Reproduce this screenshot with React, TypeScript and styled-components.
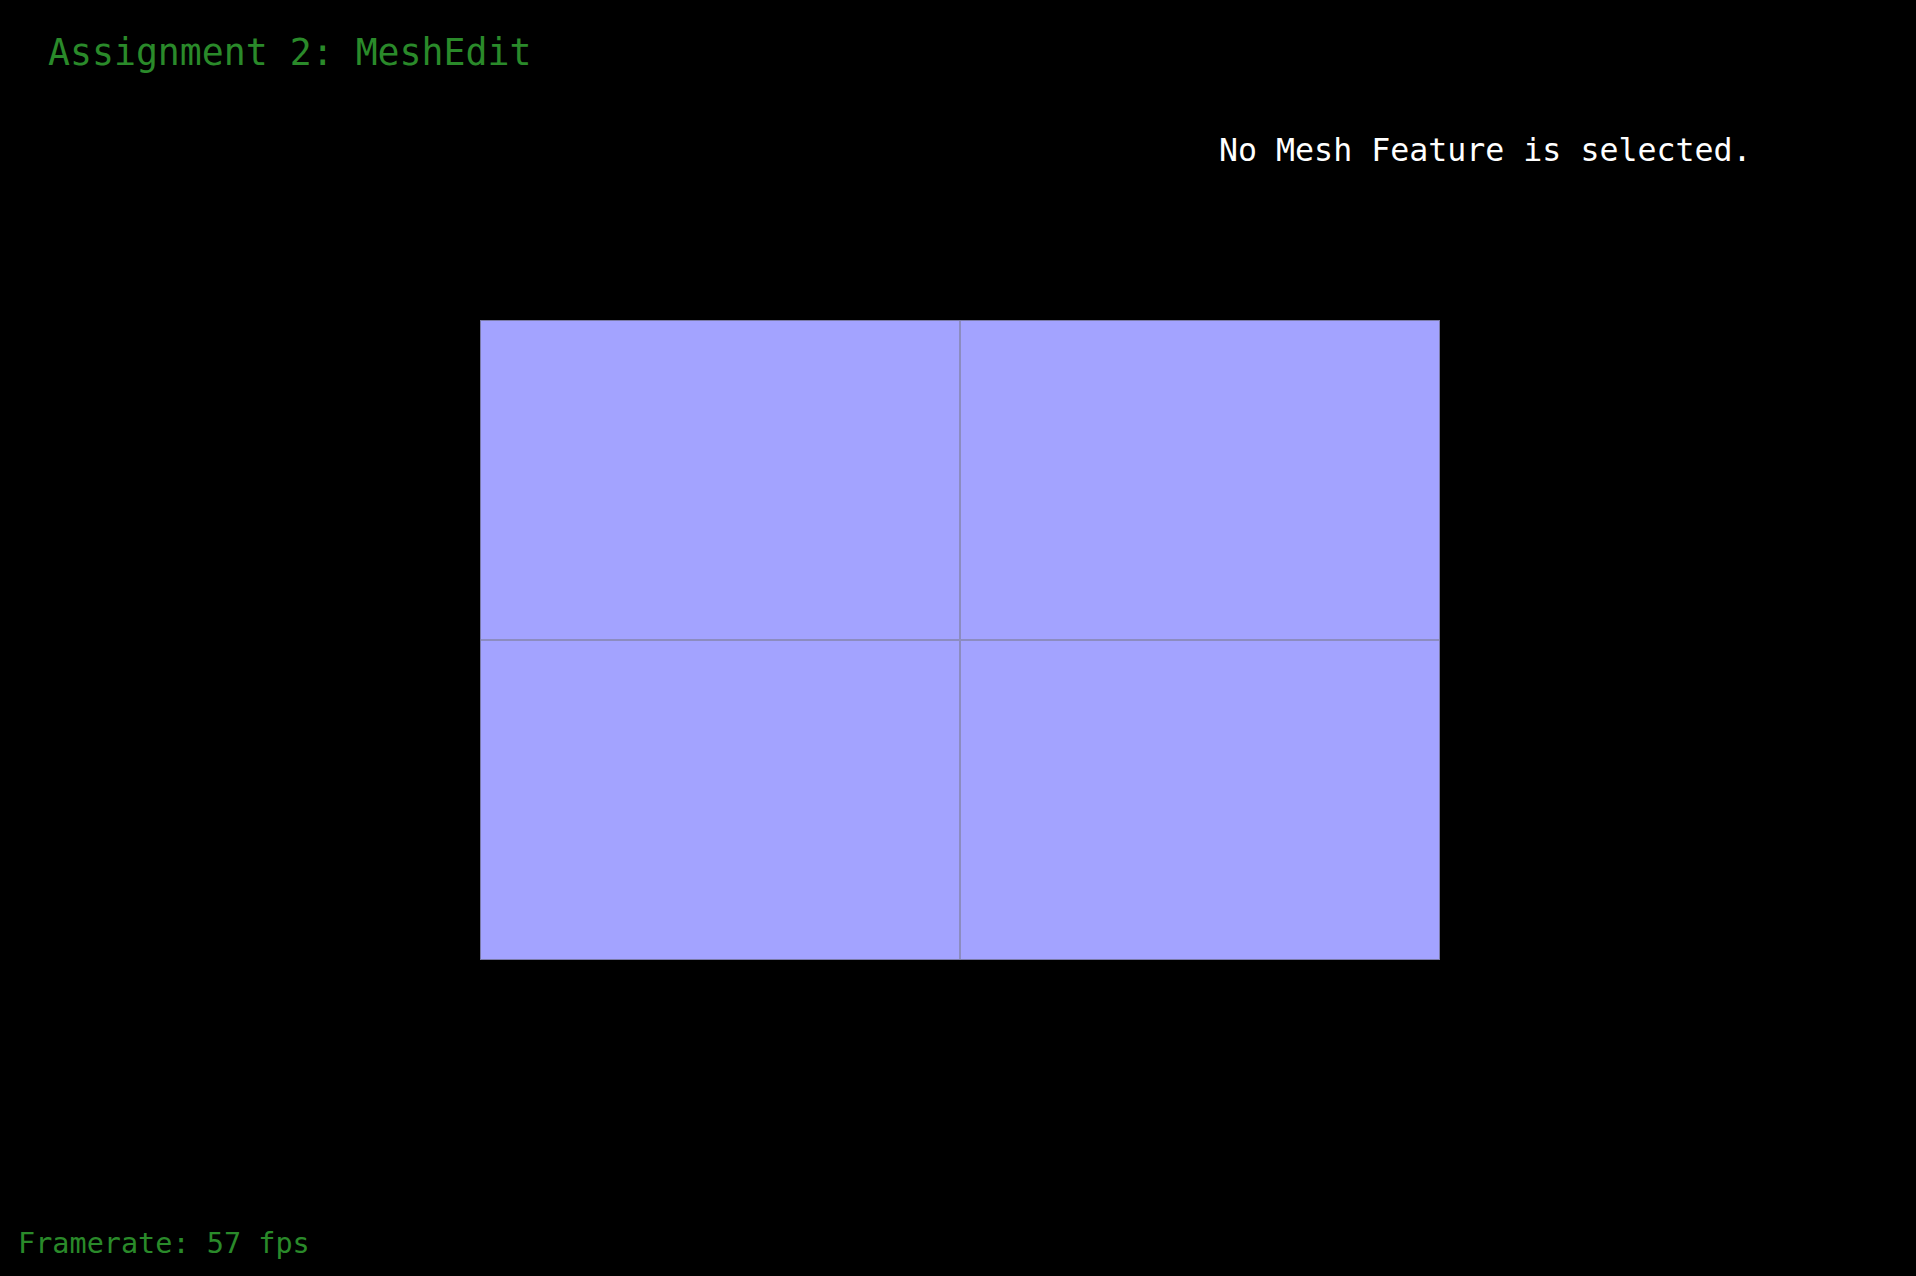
import React from "react";
import styled, { createGlobalStyle } from "styled-components";

const GlobalStyle = createGlobalStyle`
	html, body {
		margin: 0;
		padding: 0;
		background: #000000;
		overflow: hidden;
	}
`;

const Viewport = styled.div`
	position: relative;
	box-sizing: border-box;
	width: 100vw;
	height: 100vh;
	padding: 4px 0 0 4px;
	background: #000000;
	display: grid;
	place-items: center;
	font-family: "DejaVu Sans Mono", "Liberation Mono", monospace;
	line-height: 1;
`;

const HudText = styled.div<{ $size: number; $color: string }>`
	position: absolute;
	font-size: ${({ $size }) => $size}px;
	color: ${({ $color }) => $color};
	white-space: pre;
`;

const Title = styled(HudText)`
	top: 35px;
	left: 48px;
`;

const Info = styled(HudText)`
	top: 135px;
	left: 1219px;
`;

const Footer = styled(HudText)`
	top: 1230px;
	left: 18px;
`;

const MESH_W = 960;
const MESH_H = 640;

const Mesh = () => {
	const cols = 2;
	const rows = 2;
	const cw = MESH_W / cols;
	const ch = MESH_H / rows;

	return (
		<svg width={MESH_W} height={MESH_H} viewBox={`0 0 ${MESH_W} ${MESH_H}`}>
			<rect x={0} y={0} width={MESH_W} height={MESH_H} fill="#a3a3ff" />
			{Array.from({ length: cols - 1 }).map((_, i) => (
				<line
					key={"v" + i}
					x1={cw * (i + 1)}
					y1={0}
					x2={cw * (i + 1)}
					y2={MESH_H}
					stroke="#8c8cc0"
					strokeWidth={2}
				/>
			))}
			{Array.from({ length: rows - 1 }).map((_, i) => (
				<line
					key={"h" + i}
					x1={0}
					y1={ch * (i + 1)}
					x2={MESH_W}
					y2={ch * (i + 1)}
					stroke="#8c8cc0"
					strokeWidth={2}
				/>
			))}
			<rect
				x={0.5}
				y={0.5}
				width={MESH_W - 1}
				height={MESH_H - 1}
				fill="none"
				stroke="#7a7aa6"
				strokeWidth={1}
			/>
		</svg>
	);
};

const App = () => {
	return (
		<>
			<GlobalStyle />
			<Viewport>
				<Mesh />
				<Title $size={36.5} $color="#2a8a2a">
					Assignment 2: MeshEdit
				</Title>
				<Info $size={31.6} $color="#ffffff">
					No Mesh Feature is selected.
				</Info>
				<Footer $size={28.5} $color="#2a8a2a">
					Framerate: 57 fps
				</Footer>
			</Viewport>
		</>
	);
};

export default App;
